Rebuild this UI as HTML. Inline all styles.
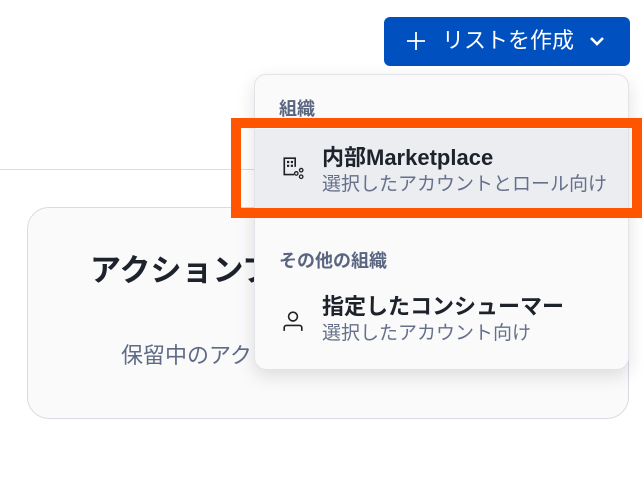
<!DOCTYPE html>
<html><head><meta charset="utf-8"><style>
*{margin:0;padding:0;box-sizing:border-box}
body{width:644px;height:487px;overflow:hidden;background:#fff;font-family:"Liberation Sans","Noto Sans CJK JP",sans-serif;position:relative}
.abs{position:absolute}
.line{left:0;top:169px;width:260px;height:1px;background:#dcdde3}
.card{left:27px;top:207px;width:602px;height:212px;border:1px solid #d9dae2;border-radius:22px;background:#fafafb;overflow:hidden}
.btn{left:384px;top:17px;width:246px;height:49px;background:#0050c0;border-radius:6px;color:#fff;font-size:22px}
.dd{left:254px;top:74px;width:375px;height:296px;background:#fafafb;border:1px solid #e2e3e8;border-radius:12px;box-shadow:0 6px 18px rgba(0,0,0,.12)}
.lbl{font-size:18px;font-weight:bold;color:#5a6580;line-height:1}
.t{font-size:22px;font-weight:bold;color:#1d222b;white-space:nowrap;line-height:1}
.s{font-size:19px;color:#66708a;white-space:nowrap;line-height:1}
.orange{left:231px;top:118px;width:411px;height:100px;border:10px solid #ff5500}
</style></head><body>
<div class="abs line"></div>
<div class="abs card">
 <div class="abs" style="left:62px;top:47px;font-size:31px;line-height:1;font-weight:bold;color:#1d222b;white-space:nowrap">アクションプランはありません</div>
 <div class="abs" style="left:93px;top:137px;font-size:22px;line-height:1;color:#5f6b85;white-space:nowrap">保留中のアクションはありません</div>
</div>
<div class="abs btn">
 <svg class="abs" style="left:22px;top:14px" width="20" height="20" viewBox="0 0 20 20"><path d="M10 1v18M1 10h18" stroke="#fff" stroke-width="1.8"/></svg>
 <div class="abs" style="left:58px;top:13px;white-space:nowrap;line-height:1">リストを作成</div>
 <svg class="abs" style="left:204px;top:17px" width="18" height="14" viewBox="0 0 18 14"><path d="M3 4l6 6 6-6" stroke="#fff" stroke-width="2.6" fill="none"/></svg>
</div>
<div class="abs dd">
 <div class="abs lbl" style="left:24px;top:25px">組織</div>
 <div class="abs" style="left:0;top:54px;width:373px;height:79px;background:#ebedf1"></div>
 <svg class="abs" style="left:27px;top:81px" width="22" height="24" viewBox="0 0 20 22"><path d="M11 17H2V2h10v8" stroke="#222" stroke-width="1.5" fill="none"/><rect x="4.5" y="4.5" width="2" height="2" fill="#222"/><rect x="8" y="4.5" width="2" height="2" fill="#222"/><rect x="4.5" y="8" width="2" height="2" fill="#222"/><rect x="8" y="8" width="2" height="2" fill="#222"/><circle cx="13" cy="16" r="1.6" stroke="#222" stroke-width="1.2" fill="none"/><circle cx="17.5" cy="13" r="1.6" stroke="#222" stroke-width="1.2" fill="none"/><circle cx="17.5" cy="19" r="1.6" stroke="#222" stroke-width="1.2" fill="none"/></svg>
 <div class="abs t" style="left:67px;top:72px">内部Marketplace</div>
 <div class="abs s" style="left:67px;top:100px">選択したアカウントとロール向け</div>
 <div class="abs lbl" style="left:24px;top:177px">その他の組織</div>
 <svg class="abs" style="left:27px;top:235px" width="22" height="22" viewBox="0 0 20 20"><circle cx="10" cy="6" r="4" stroke="#222" stroke-width="1.5" fill="none"/><path d="M2 19v-3a2 2 0 0 1 2-2h12a2 2 0 0 1 2 2v3" stroke="#222" stroke-width="1.5" fill="none"/></svg>
 <div class="abs t" style="left:67px;top:221px">指定したコンシューマー</div>
 <div class="abs s" style="left:67px;top:249px">選択したアカウント向け</div>
</div>
<div class="abs orange"></div>
</body></html>
